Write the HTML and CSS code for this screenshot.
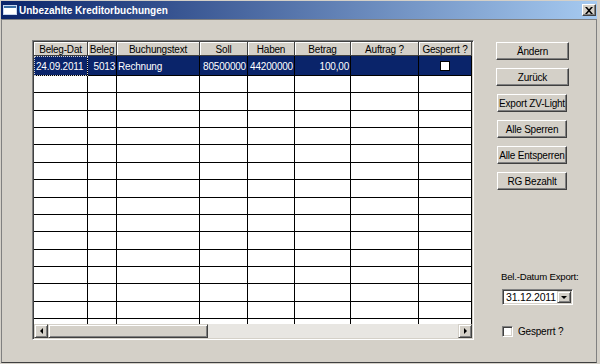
FILE: index.html
```html
<!DOCTYPE html>
<html lang="de">
<head>
<meta charset="utf-8">
<title>Unbezahlte Kreditorbuchungen</title>
<link rel="stylesheet" href="styles.css">
</head>
<body>
<div class="window">
  <div class="titlebar">
    <svg class="ticon" width="14" height="10" viewBox="0 0 14 10"><rect x="0.5" y="0.5" width="13" height="9" fill="#fff" stroke="#c8d8f0"/><rect x="1" y="1" width="12" height="2" fill="#3a6ea5"/></svg>
    <span class="ttext">Unbezahlte Kreditorbuchungen</span>
    <span class="close"><svg width="8" height="7" viewBox="0 0 8 7"><path d="M0 0h2l2 2.2 2-2.2h2l-3 3.5 3 3.5h-2l-2-2.2-2 2.2h-2l3-3.5z" fill="#000"/></svg></span>
  </div>
  <div class="client">
    <div class="gridframe">
      <div class="row head">
        <div class="c">Beleg-Dat</div><div class="c">Beleg</div><div class="c">Buchungstext</div><div class="c">Soll</div><div class="c">Haben</div><div class="c">Betrag</div><div class="c">Auftrag ?</div><div class="c">Gesperrt ?</div>
      </div>
      <div class="rows">
        <div class="row sel">
          <div class="c l focus">24.09.2011</div><div class="c r">5013</div><div class="c l">Rechnung</div><div class="c r">80500000</div><div class="c r">44200000</div><div class="c r">100,00</div><div class="c"></div><div class="c m"><span class="cb"></span></div>
        </div>
        <div class="row e"><div class="c"></div><div class="c"></div><div class="c"></div><div class="c"></div><div class="c"></div><div class="c"></div><div class="c"></div><div class="c"></div></div>
        <div class="row e"><div class="c"></div><div class="c"></div><div class="c"></div><div class="c"></div><div class="c"></div><div class="c"></div><div class="c"></div><div class="c"></div></div>
        <div class="row e"><div class="c"></div><div class="c"></div><div class="c"></div><div class="c"></div><div class="c"></div><div class="c"></div><div class="c"></div><div class="c"></div></div>
        <div class="row e"><div class="c"></div><div class="c"></div><div class="c"></div><div class="c"></div><div class="c"></div><div class="c"></div><div class="c"></div><div class="c"></div></div>
        <div class="row e"><div class="c"></div><div class="c"></div><div class="c"></div><div class="c"></div><div class="c"></div><div class="c"></div><div class="c"></div><div class="c"></div></div>
        <div class="row e"><div class="c"></div><div class="c"></div><div class="c"></div><div class="c"></div><div class="c"></div><div class="c"></div><div class="c"></div><div class="c"></div></div>
        <div class="row e"><div class="c"></div><div class="c"></div><div class="c"></div><div class="c"></div><div class="c"></div><div class="c"></div><div class="c"></div><div class="c"></div></div>
        <div class="row e"><div class="c"></div><div class="c"></div><div class="c"></div><div class="c"></div><div class="c"></div><div class="c"></div><div class="c"></div><div class="c"></div></div>
        <div class="row e"><div class="c"></div><div class="c"></div><div class="c"></div><div class="c"></div><div class="c"></div><div class="c"></div><div class="c"></div><div class="c"></div></div>
        <div class="row e"><div class="c"></div><div class="c"></div><div class="c"></div><div class="c"></div><div class="c"></div><div class="c"></div><div class="c"></div><div class="c"></div></div>
        <div class="row e"><div class="c"></div><div class="c"></div><div class="c"></div><div class="c"></div><div class="c"></div><div class="c"></div><div class="c"></div><div class="c"></div></div>
        <div class="row e"><div class="c"></div><div class="c"></div><div class="c"></div><div class="c"></div><div class="c"></div><div class="c"></div><div class="c"></div><div class="c"></div></div>
        <div class="row e"><div class="c"></div><div class="c"></div><div class="c"></div><div class="c"></div><div class="c"></div><div class="c"></div><div class="c"></div><div class="c"></div></div>
        <div class="row e"><div class="c"></div><div class="c"></div><div class="c"></div><div class="c"></div><div class="c"></div><div class="c"></div><div class="c"></div><div class="c"></div></div>
        <div class="row e"><div class="c"></div><div class="c"></div><div class="c"></div><div class="c"></div><div class="c"></div><div class="c"></div><div class="c"></div><div class="c"></div></div>
      </div>
      <div class="hscroll">
        <span class="sbtn"><span class="tri-l"></span></span>
        <span class="thumb"></span>
        <span class="track"></span>
        <span class="sbtn"><span class="tri-r"></span></span>
      </div>
    </div>
    <div class="side">
      <button class="btn wide">Ändern</button>
      <button class="btn wide">Zurück</button>
      <button class="btn">Export ZV-Light</button>
      <button class="btn">Alle Sperren</button>
      <button class="btn">Alle Entsperren</button>
      <button class="btn">RG Bezahlt</button>
      <div class="lbl">Bel.-Datum Export:</div>
      <div class="combo"><span class="cval">31.12.2011</span><span class="dd"><span class="tri-d"></span></span></div>
      <label class="chk"><span class="box"></span><span>Gesperrt ?</span></label>
    </div>
  </div>
</div>
</body>
</html>
```

FILE: styles.css
```css
* { box-sizing: border-box; }
html, body { margin: 0; padding: 0; }
body {
  width: 600px; height: 364px; overflow: hidden;
  background: #d4d0c8;
  font-family: "Liberation Sans", Arial, sans-serif;
  font-size: 10px; letter-spacing: -0.2px; color: #000;
}
.window {
  width: 600px; height: 364px;
  padding: 1px 3px 1px 1px;
  display: flex; flex-direction: column;
  background: #d4d0c8;
}
.titlebar {
  height: 18px; flex: none;
  display: flex; align-items: center;
  padding: 0 1px 0 2px;
  background: linear-gradient(to right, #0a246a, #a6caf0);
  color: #fff; font-weight: bold; font-size: 10px; letter-spacing: 0;
}
.ticon { flex: none; margin-right: 2px; }
.ttext { white-space: nowrap; }
.close {
  margin-left: auto; width: 14px; height: 12px;
  background: #d4d0c8;
  border: 1px solid; border-color: #fff #404040 #404040 #fff;
  box-shadow: inset -1px -1px 0 #808080;
  display: flex; align-items: center; justify-content: center;
}
.client {
  flex: 1;
  border: 1px solid #808080; border-bottom-color: #404040;
  display: flex; align-items: flex-start;
  padding: 20px 0 0 30px;
}
.gridframe {
  width: 442px; height: 300px; flex: none;
  border: 1px solid; border-color: #808080 #fff #fff #808080;
  box-shadow: inset 1px 1px 0 #404040, inset -1px -1px 0 #d4d0c8;
  padding: 1px;
  display: flex; flex-direction: column;
  background: #fff;
}
.row {
  display: grid;
  grid-template-columns: 54px 29px 83px 48px 47px 56px 68px 53px;
  flex: none;
}
.c {
  border-right: 1px solid #000; border-bottom: 1px solid #000;
  display: flex; align-items: center; justify-content: center;
  white-space: nowrap; overflow: hidden;
  padding: 0 1px;
}
.head { height: 14px; }
.head .c {
  background: #d4d0c8;
  box-shadow: inset 1px 1px 0 #fff;
  border-right-color: #404040; border-bottom-color: #404040;
  padding-top: 1px;
}
.rows { flex: 1; overflow: hidden; display: flex; flex-direction: column; }
.sel { height: 20px; background: #0a246a; color: #fff; }
.sel .c { padding-top: 1px; }
.e { height: 17.36px; }
.l { justify-content: flex-start; }
.r { justify-content: flex-end; }
.m { justify-content: center; }
.focus { outline: 1px dotted #d0d0d0; outline-offset: -1px; padding-left: 2px; }
.cb { width: 10px; height: 10px; background: #fff; border: 1px solid #000; margin-left: -1px; }
.hscroll { height: 14px; flex: none; display: flex; background: #d4d0c8; }
.sbtn, .thumb {
  background: #d4d0c8;
  border: 1px solid; border-color: #d4d0c8 #404040 #404040 #d4d0c8;
  box-shadow: inset 1px 1px 0 #fff, inset -1px -1px 0 #808080;
}
.sbtn { width: 14px; display: flex; align-items: center; justify-content: center; }
.thumb { width: 160px; }
.track { flex: 1; background: #e8e6e2; }
.tri-l { width: 0; height: 0; border-right: 3px solid #000; border-top: 3px solid transparent; border-bottom: 3px solid transparent; }
.tri-r { width: 0; height: 0; border-left: 3px solid #000; border-top: 3px solid transparent; border-bottom: 3px solid transparent; }
.tri-d { width: 0; height: 0; border-top: 3px solid #000; border-left: 3.5px solid transparent; border-right: 3.5px solid transparent; }
.side {
  margin-left: 22px; width: 90px;
  display: flex; flex-direction: column; align-items: flex-start;
  padding-top: 2px;
}
.btn {
  width: 70px; height: 18px; margin: 0 0 8px 1px; padding: 0;
  background: #d4d0c8;
  border: 1px solid; border-color: #fff #404040 #404040 #fff;
  box-shadow: inset -1px -1px 0 #808080;
  font-family: inherit; font-size: 10px; letter-spacing: -0.2px; color: #000;
  display: flex; align-items: center; justify-content: center;
  white-space: nowrap;
}
.btn.wide { width: 73px; margin-left: 0; }
.lbl { margin: 73px 0 0 5px; height: 12px; line-height: 12px; font-size: 9.6px; }
.combo {
  margin: 6px 0 0 6px; width: 71px; height: 16px;
  border: 1px solid; border-color: #808080 #fff #fff #808080;
  box-shadow: inset 1px 1px 0 #404040, inset -1px -1px 0 #d4d0c8;
  background: #fff; padding: 1px;
  display: flex; align-items: stretch;
}
.cval { flex: 1; padding-left: 2px; display: flex; align-items: center; font-size: 10.5px; }
.dd {
  width: 14px;
  background: #d4d0c8;
  border: 1px solid; border-color: #d4d0c8 #404040 #404040 #d4d0c8;
  box-shadow: inset 1px 1px 0 #fff, inset -1px -1px 0 #808080;
  display: flex; align-items: center; justify-content: center;
}
.chk { margin: 21px 0 0 6px; display: flex; align-items: center; gap: 5px; }
.box {
  width: 11px; height: 11px;
  border: 1px solid; border-color: #808080 #fff #fff #808080;
  box-shadow: inset 1px 1px 0 #404040, inset -1px -1px 0 #d4d0c8;
  background: #fff;
}
```
